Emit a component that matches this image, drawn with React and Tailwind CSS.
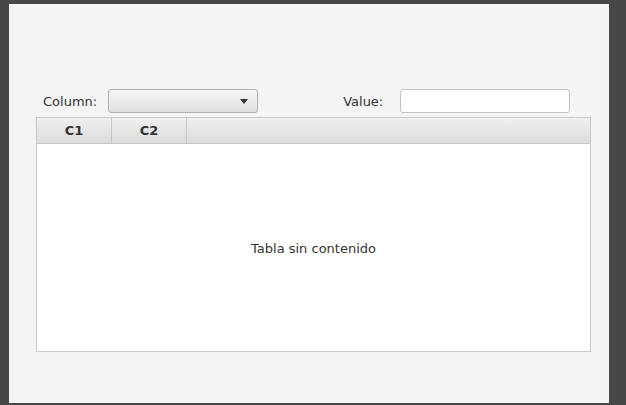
import React from "react";

const App = () => {
  return (
    <div className="w-[626px] h-[405px] bg-[#474747] pt-[4px] pl-[9px] overflow-hidden font-['DejaVu_Sans',sans-serif] text-[13px] text-[#333333]">
      <div className="w-[600px] h-[399px] bg-[#f4f4f4] flex flex-col">
        {/* Filter row */}
        <div className="mt-[85px] h-[24px] flex items-center">
          <span className="ml-[34px] leading-none">Column:</span>
          <div className="ml-[11px] w-[150px] h-[24px] rounded-[3px] border border-[#b0b0b0] bg-gradient-to-b from-[#f6f6f6] to-[#e0e0e0] flex items-center justify-end pr-[9px]">
            <div className="w-0 h-0 border-l-[4.5px] border-r-[4.5px] border-t-[5px] border-l-transparent border-r-transparent border-t-[#333333]" />
          </div>
          <span className="ml-[85px] leading-none">Value:</span>
          <div className="ml-[17px] w-[170px] h-[24px] rounded-[3px] border border-[#c2c2c2] bg-white" />
        </div>

        {/* Table */}
        <div className="mt-[4px] ml-[27px] w-[555px] h-[235px] border border-[#c8c8c8] bg-white flex flex-col">
          <div className="h-[26px] flex border-b border-[#c8c8c8] bg-gradient-to-b from-[#f0f0f0] to-[#dcdcdc] font-bold">
            <div className="w-[75px] flex items-center justify-center border-r border-[#c8c8c8]">C1</div>
            <div className="w-[75px] flex items-center justify-center border-r border-[#c8c8c8]">C2</div>
            <div className="flex-1" />
          </div>
          <div className="flex-1 flex items-center justify-center pt-[2px]">Tabla sin contenido</div>
        </div>
      </div>
    </div>
  );
};

export default App;
